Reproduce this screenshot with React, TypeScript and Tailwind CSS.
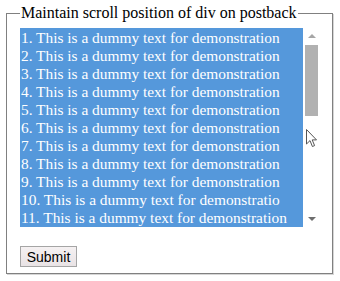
const LINES = [
  '1. This is a dummy text for demonstration',
  '2. This is a dummy text for demonstration',
  '3. This is a dummy text for demonstration',
  '4. This is a dummy text for demonstration',
  '5. This is a dummy text for demonstration',
  '6. This is a dummy text for demonstration',
  '7. This is a dummy text for demonstration',
  '8. This is a dummy text for demonstration',
  '9. This is a dummy text for demonstration',
  '10. This is a dummy text for demonstratio',
  '11. This is a dummy text for demonstration',
];

function Cursor() {
  return (
    <svg className="absolute left-[306px] top-[129px]" width="11" height="19" viewBox="0 0 11 19">
      <path d="M0.5 0.5 L0.5 15 L4 11.6 L6.4 17.5 L8.6 16.6 L6.2 10.9 L10.5 10.9 Z" fill="#fff" stroke="#555" strokeWidth="1" strokeLinejoin="round" />
    </svg>
  );
}

function Scrollbar() {
  return (
    <div className="flex h-[199px] w-[17px] flex-col items-center bg-white">
      <div className="mt-[6px] h-0 w-0 border-x-[4px] border-b-[4px] border-x-transparent border-b-[#a6a6a6]" />
      <div className="mt-[7px] h-[71px] w-[13px] bg-[#b1b1b1]" />
      <div className="mt-auto mb-[6px] h-0 w-0 border-x-[4px] border-t-[4px] border-x-transparent border-t-[#6e6e6e]" />
    </div>
  );
}

export default function App() {
  return (
    <div className="relative h-[281px] w-[340px] bg-white pt-1 pl-[6px]">
      <fieldset className="w-[327px] border border-[#808080] pr-3 pb-[4px] pl-[13px] pt-[6px] shadow-[1px_1px_0_#d6d6d6] font-['Liberation_Serif',serif] text-[16px] text-black">
        <legend className="px-px leading-[18px]">Maintain scroll position of div on postback</legend>
        <div className="flex">
          <div className="h-[199px] w-[283px] overflow-hidden bg-[#5598db] pt-px pl-px text-[15.4px] leading-[18px] whitespace-nowrap text-white">
            {LINES.map(line => (
              <div key={line}>{line}</div>
            ))}
          </div>
          <Scrollbar />
        </div>
        <button
          type="button"
          className="mt-[19px] h-[21px] w-[57px] border border-[#a5a5a5] bg-gradient-to-b from-[#f5f1f2] to-[#e9e3e5] font-['Liberation_Sans',Arial,sans-serif] text-[14px] text-black"
        >
          Submit
        </button>
      </fieldset>
      <Cursor />
    </div>
  );
}
